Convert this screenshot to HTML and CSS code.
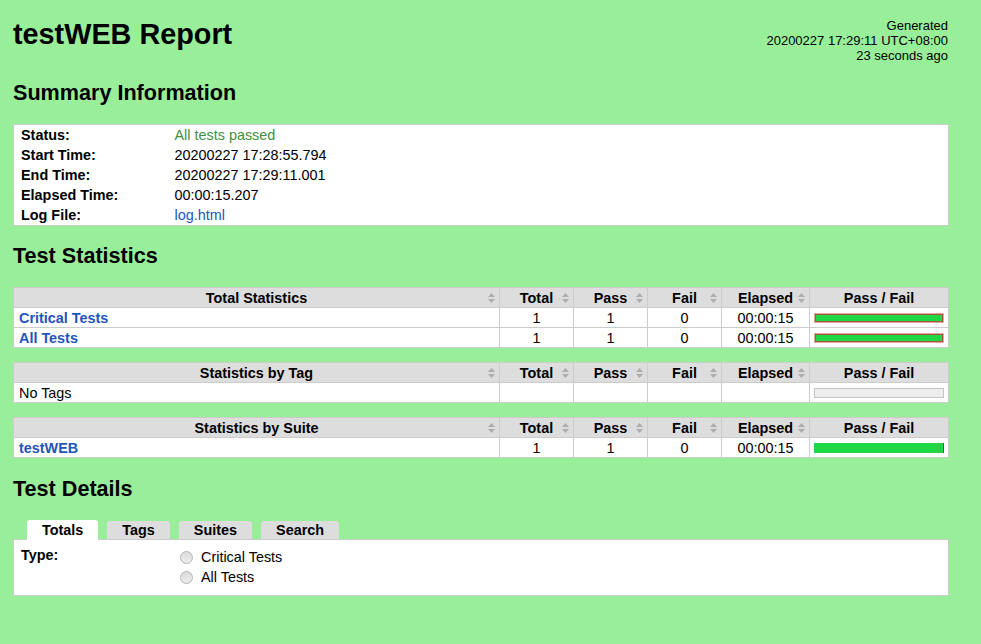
FILE: index.html
```html
<!DOCTYPE html>
<html lang="en">
<head>
<meta charset="utf-8">
<title>testWEB Report</title>
<link rel="stylesheet" href="styles.css">
</head>
<body>
<div class="page">
  <header class="header">
    <h1 class="title">testWEB Report</h1>
    <div class="generated">Generated<br>20200227 17:29:11 UTC+08:00<br>23 seconds ago</div>
  </header>

  <h2 class="section-title">Summary Information</h2>
  <table class="summary">
    <tr><th>Status:</th><td class="pass-text">All tests passed</td></tr>
    <tr><th>Start Time:</th><td>20200227 17:28:55.794</td></tr>
    <tr><th>End Time:</th><td>20200227 17:29:11.001</td></tr>
    <tr><th>Elapsed Time:</th><td>00:00:15.207</td></tr>
    <tr><th>Log File:</th><td><a class="link" href="#">log.html</a></td></tr>
  </table>

  <h2 class="section-title">Test Statistics</h2>
  <div class="stats-group">
    <table class="statistics">
      <thead>
        <tr>
          <th class="c-name sortable">Total Statistics<svg class="sort" viewBox="0 0 7 10"><path d="M3.5 0L7 4H0z"/><path d="M0 6h7l-3.5 4z"/></svg></th>
          <th class="c-num sortable">Total<svg class="sort" viewBox="0 0 7 10"><path d="M3.5 0L7 4H0z"/><path d="M0 6h7l-3.5 4z"/></svg></th>
          <th class="c-num sortable">Pass<svg class="sort" viewBox="0 0 7 10"><path d="M3.5 0L7 4H0z"/><path d="M0 6h7l-3.5 4z"/></svg></th>
          <th class="c-num sortable">Fail<svg class="sort" viewBox="0 0 7 10"><path d="M3.5 0L7 4H0z"/><path d="M0 6h7l-3.5 4z"/></svg></th>
          <th class="c-elapsed sortable">Elapsed<svg class="sort" viewBox="0 0 7 10"><path d="M3.5 0L7 4H0z"/><path d="M0 6h7l-3.5 4z"/></svg></th>
          <th class="c-graph">Pass / Fail</th>
        </tr>
      </thead>
      <tbody>
        <tr>
          <td class="stat-name"><a class="link strong" href="#">Critical Tests</a></td>
          <td class="num">1</td><td class="num">1</td><td class="num">0</td><td class="num">00:00:15</td>
          <td class="graph-cell"><div class="graph critical"><div class="pass-bar"></div></div></td>
        </tr>
        <tr>
          <td class="stat-name"><a class="link strong" href="#">All Tests</a></td>
          <td class="num">1</td><td class="num">1</td><td class="num">0</td><td class="num">00:00:15</td>
          <td class="graph-cell"><div class="graph critical"><div class="pass-bar"></div></div></td>
        </tr>
      </tbody>
    </table>

    <table class="statistics">
      <thead>
        <tr>
          <th class="c-name sortable">Statistics by Tag<svg class="sort" viewBox="0 0 7 10"><path d="M3.5 0L7 4H0z"/><path d="M0 6h7l-3.5 4z"/></svg></th>
          <th class="c-num sortable">Total<svg class="sort" viewBox="0 0 7 10"><path d="M3.5 0L7 4H0z"/><path d="M0 6h7l-3.5 4z"/></svg></th>
          <th class="c-num sortable">Pass<svg class="sort" viewBox="0 0 7 10"><path d="M3.5 0L7 4H0z"/><path d="M0 6h7l-3.5 4z"/></svg></th>
          <th class="c-num sortable">Fail<svg class="sort" viewBox="0 0 7 10"><path d="M3.5 0L7 4H0z"/><path d="M0 6h7l-3.5 4z"/></svg></th>
          <th class="c-elapsed sortable">Elapsed<svg class="sort" viewBox="0 0 7 10"><path d="M3.5 0L7 4H0z"/><path d="M0 6h7l-3.5 4z"/></svg></th>
          <th class="c-graph">Pass / Fail</th>
        </tr>
      </thead>
      <tbody>
        <tr>
          <td class="stat-name">No Tags</td>
          <td class="num"></td><td class="num"></td><td class="num"></td><td class="num"></td>
          <td class="graph-cell"><div class="graph empty"></div></td>
        </tr>
      </tbody>
    </table>

    <table class="statistics">
      <thead>
        <tr>
          <th class="c-name sortable">Statistics by Suite<svg class="sort" viewBox="0 0 7 10"><path d="M3.5 0L7 4H0z"/><path d="M0 6h7l-3.5 4z"/></svg></th>
          <th class="c-num sortable">Total<svg class="sort" viewBox="0 0 7 10"><path d="M3.5 0L7 4H0z"/><path d="M0 6h7l-3.5 4z"/></svg></th>
          <th class="c-num sortable">Pass<svg class="sort" viewBox="0 0 7 10"><path d="M3.5 0L7 4H0z"/><path d="M0 6h7l-3.5 4z"/></svg></th>
          <th class="c-num sortable">Fail<svg class="sort" viewBox="0 0 7 10"><path d="M3.5 0L7 4H0z"/><path d="M0 6h7l-3.5 4z"/></svg></th>
          <th class="c-elapsed sortable">Elapsed<svg class="sort" viewBox="0 0 7 10"><path d="M3.5 0L7 4H0z"/><path d="M0 6h7l-3.5 4z"/></svg></th>
          <th class="c-graph">Pass / Fail</th>
        </tr>
      </thead>
      <tbody>
        <tr>
          <td class="stat-name"><a class="link strong" href="#">testWEB</a></td>
          <td class="num">1</td><td class="num">1</td><td class="num">0</td><td class="num">00:00:15</td>
          <td class="graph-cell"><div class="graph suite"><div class="pass-bar"></div></div></td>
        </tr>
      </tbody>
    </table>
  </div>

  <h2 class="section-title">Test Details</h2>
  <ul class="tabs">
    <li class="tab active">Totals</li>
    <li class="tab">Tags</li>
    <li class="tab">Suites</li>
    <li class="tab">Search</li>
  </ul>
  <div class="detail-box">
    <div class="detail-label">Type:</div>
    <div class="options">
      <label class="option"><input class="radio" type="radio" name="type"><span>Critical Tests</span></label>
      <label class="option"><input class="radio" type="radio" name="type"><span>All Tests</span></label>
    </div>
  </div>
</div>
</body>
</html>
```
FILE: styles.css
```css
* {
  box-sizing: border-box;
}

html,
body {
  margin: 0;
  padding: 0;
}

body {
  background: #99ee99;
  color: #000;
  font-family: "Liberation Sans", Arial, Helvetica, sans-serif;
  font-size: 14.4px;
}

.page {
  padding: 18px 13px 0;
}

.header {
  width: 935px;
  height: 62px;
  display: flex;
  justify-content: space-between;
  align-items: flex-start;
}

.title {
  margin: 0;
  font-size: 28.8px;
  line-height: 33px;
  font-weight: bold;
}

.generated {
  font-size: 13px;
  line-height: 15px;
  text-align: right;
  white-space: nowrap;
}

.section-title {
  margin: 0 0 19px;
  font-size: 21.6px;
  line-height: 25px;
  font-weight: bold;
}

.link {
  color: #2255bb;
  text-decoration: none;
}

.strong {
  font-weight: bold;
}

.pass-text {
  color: #3f8f3f;
}

/* Summary */
.summary {
  width: 936px;
  border-collapse: collapse;
  border: 1px solid #cccccc;
  background: #fff;
  margin-bottom: 17px;
}

.summary th,
.summary td {
  text-align: left;
  vertical-align: top;
  line-height: 16px;
  padding: 2px 6px;
}

.summary th {
  width: 155px;
  padding-left: 7px;
  font-weight: bold;
}

/* Statistics */
.stats-group {
  display: flex;
  flex-direction: column;
  gap: 14px;
  margin-bottom: 18px;
}

.statistics {
  width: 936px;
  border-collapse: collapse;
  table-layout: fixed;
  background: #fff;
}

.statistics th,
.statistics td {
  border: 1px solid #cccccc;
  line-height: 17px;
  padding: 2px 5px 0;
  height: 20px;
  white-space: nowrap;
}

.statistics th {
  background: #dddddd;
  font-weight: bold;
  text-align: center;
  position: relative;
}

.c-num {
  width: 74px;
}

.c-elapsed {
  width: 88px;
}

.c-graph {
  width: 139px;
}

.sort {
  position: absolute;
  right: 4px;
  top: 50%;
  width: 7px;
  height: 10px;
  margin-top: -5px;
  fill: #adadad;
}

.stat-name {
  text-align: left;
}

.num {
  text-align: center;
}

.statistics td.graph-cell {
  padding: 0 4px;
}

.graph {
  height: 10px;
  width: 100%;
}

.graph.critical {
  border: 1px solid #e6a79c;
}

.graph.critical .pass-bar {
  height: 100%;
  background: #1ed846;
  box-shadow: inset 0 0 0 1px #a4553c;
}

.graph.suite {
  display: flex;
}

.graph.suite .pass-bar {
  height: 100%;
  flex: 1;
  background: #1ed846;
  border-right: 1px solid #a8342c;
}

.graph.empty {
  background: #eeeeee;
  border: 1px solid #c4c4c4;
}

/* Details */
.tabs {
  list-style: none;
  margin: 2px 0 0;
  padding: 0 0 0 14px;
  display: flex;
  align-items: flex-end;
  gap: 9px;
  height: 19px;
}

.tab {
  height: 18px;
  line-height: 18px;
  padding: 0 15px;
  background: #dddddd;
  font-weight: bold;
  border-radius: 3px 3px 0 0;
}

.tab.active {
  background: #fff;
  height: 20px;
  line-height: 20px;
  margin-bottom: -1px;
  position: relative;
}

.detail-box {
  width: 936px;
  background: #fff;
  border: 1px solid #cccccc;
  padding: 7px 0 8px;
  display: grid;
  grid-template-columns: 161px 1fr;
}

.detail-label {
  font-weight: bold;
  line-height: 16px;
  padding-left: 7px;
}

.options {
  display: flex;
  flex-direction: column;
}

.option {
  display: flex;
  align-items: center;
  height: 20px;
  gap: 8px;
  padding-left: 5px;
}

.radio {
  appearance: none;
  -webkit-appearance: none;
  margin: 0;
  width: 13px;
  height: 13px;
  border-radius: 50%;
  border: 1px solid #b4b4b4;
  background: linear-gradient(#dcdcdc, #ececec);
}
```
